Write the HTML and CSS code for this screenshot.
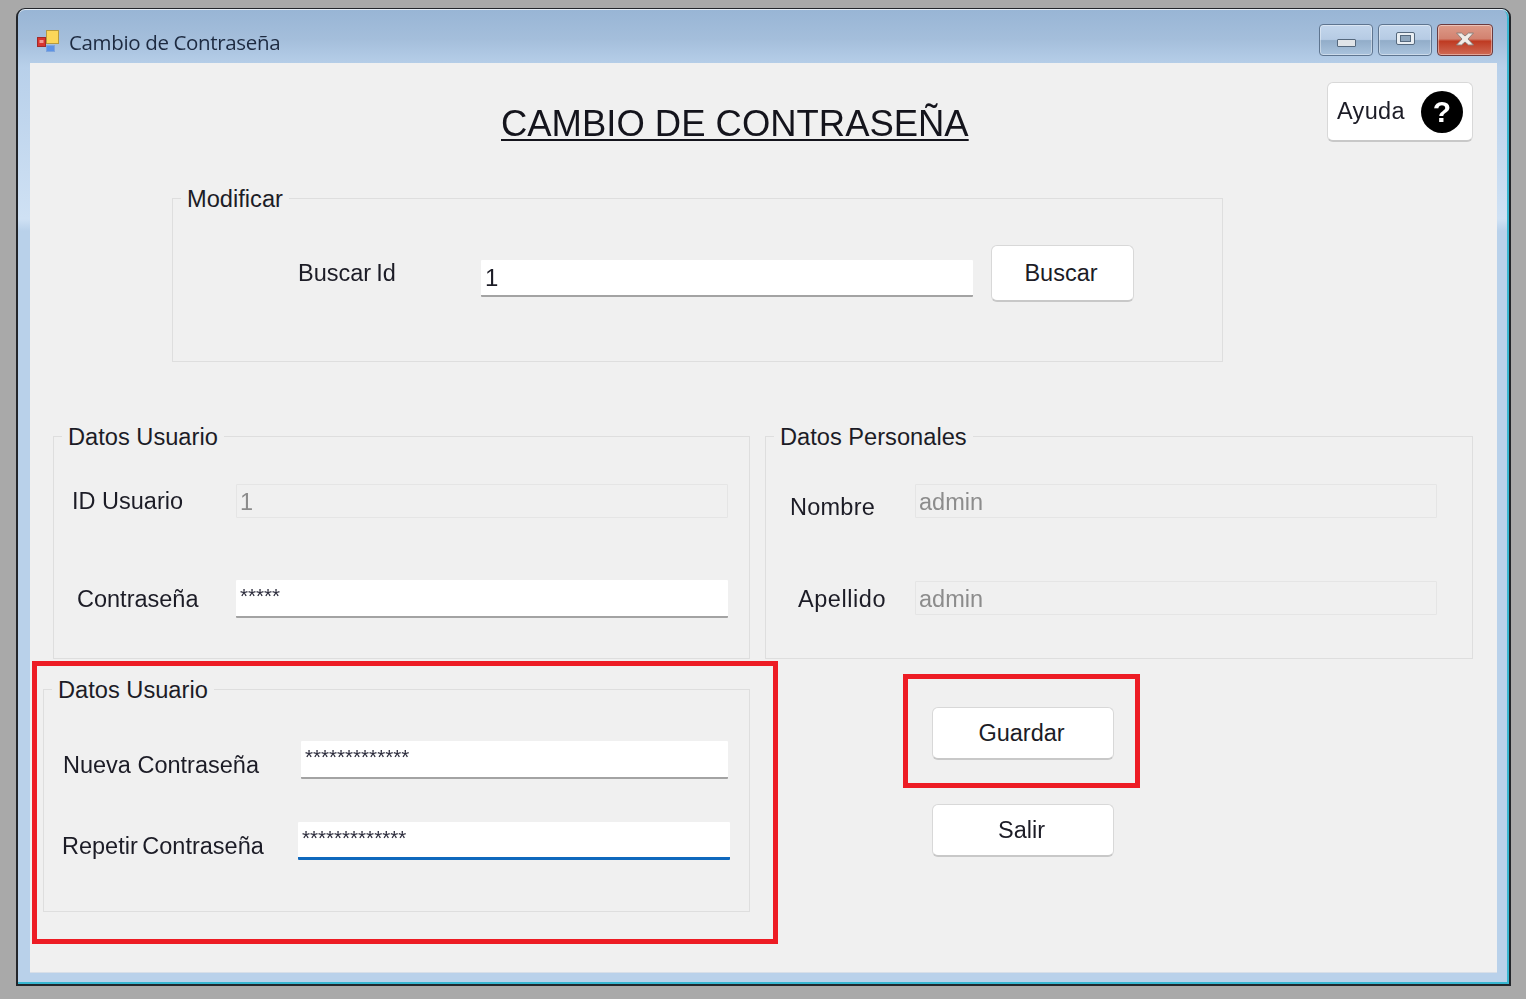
FILE: index.html
```html
<!DOCTYPE html>
<html lang="es">
<head>
<meta charset="utf-8">
<title>Cambio de Contraseña</title>
<link rel="stylesheet" href="styles.css">
</head>
<body>
<main class="stage">
  <div class="window">
    <header class="titlebar">
      <svg class="app-icon" width="22" height="23" viewBox="0 0 22 23">
        <rect x="0.5" y="7.5" width="8" height="9" fill="#d9352f" stroke="#a02a2a"/>
        <rect x="2.5" y="10" width="4" height="3" fill="#f29a94"/>
        <rect x="9.5" y="0.5" width="12" height="13" fill="#fbd75a" stroke="#b59a40"/>
        <rect x="9.5" y="15.5" width="8" height="6" fill="#5d93e6" stroke="#7fa5dc"/>
      </svg>
      <span class="window-title">Cambio de Contraseña</span>
      <div class="caption-buttons">
        <div class="cap cap-min"><span class="glyph-min"></span></div>
        <div class="cap cap-max"><span class="glyph-max"></span></div>
        <div class="cap cap-close">
          <svg class="glyph-close" width="20" height="14" viewBox="0 0 20 14"><path d="M1.500 1h5l3.500 3 3.500-3h5l-5.500 6 5.500 6h-5l-3.500-3-3.500 3h-5l5.500-6z" fill="#f1ece8" stroke="#8d7d78" stroke-width="1"/></svg>
        </div>
      </div>
    </header>
    <div class="client">
      <div class="top-row">
        <h1 class="heading">CAMBIO DE CONTRASEÑA</h1>
        <button class="btn btn-help" type="button"><span class="help-text">Ayuda</span> <span class="help-dot">?</span></button>
      </div>

      <section class="group group-search">
        <h2 class="legend">Modificar</h2>
        <div class="search-row">
          <label class="lbl lbl-buscar">Buscar Id</label>
          <input class="field field-search" type="text" value="1">
          <button class="btn btn-search" type="button">Buscar</button>
        </div>
      </section>

      <div class="data-row">
        <section class="group group-user">
          <h2 class="legend">Datos Usuario</h2>
          <div class="form-grid grid-user">
            <label class="lbl">ID Usuario</label>
            <input class="field is-disabled" type="text" value="1" disabled>
            <label class="lbl lbl-contra">Contraseña</label>
            <input class="field field-pass" type="text" value="*****">
          </div>
        </section>
        <section class="group group-personal">
          <h2 class="legend">Datos Personales</h2>
          <div class="form-grid grid-personal">
            <label class="lbl lbl-nombre">Nombre</label>
            <input class="field is-disabled" type="text" value="admin" disabled>
            <label class="lbl lbl-apellido">Apellido</label>
            <input class="field is-disabled" type="text" value="admin" disabled>
          </div>
        </section>
      </div>

      <div class="bottom-row">
        <section class="group group-new">
          <h2 class="legend">Datos Usuario</h2>
          <div class="form-grid grid-new">
            <label class="lbl lbl-nueva">Nueva Contraseña</label>
            <input class="field field-pass" type="text" value="*************">
            <label class="lbl lbl-repetir">Repetir Contraseña</label>
            <input class="field field-pass field-focus" type="text" value="*************">
          </div>
          <div class="callout callout-group"></div>
        </section>
        <div class="actions">
          <div class="action-wrap">
            <button class="btn btn-action" type="button">Guardar</button>
            <div class="callout callout-save"></div>
          </div>
          <button class="btn btn-action" type="button">Salir</button>
        </div>
      </div>
    </div>
  </div>
</main>
</body>
</html>
```

FILE: styles.css
```css
* { box-sizing: border-box; }

html, body { margin: 0; padding: 0; background: #fff; }

body {
  font-family: "Liberation Sans", Arial, sans-serif;
  color: #1c1c26;
  overflow: hidden;
}

.stage {
  width: 1526px;
  height: 999px;
  padding: 8px 0 0 16px;
  background: #a9a9a9;
}

.window {
  width: 1495px;
  height: 978px;
  padding: 0 12px 12px;
  border: 2px solid #23262b;
  border-top-width: 1px;
  border-radius: 9px 9px 0 0;
  background: linear-gradient(180deg, #98b5d5 0, #a4bedb 30px, #b8d0ea 58px, #cfe1f4 210px, #b9d1ea 222px, #b9d1ea 100%);
  box-shadow: inset 0 1px 0 #e6eef6, inset 0 -2px 0 #38b6d0, inset -2px 0 0 #38b6d0;
  filter: blur(0.45px);
}

.titlebar {
  height: 54px;
  display: flex;
  align-items: center;
  padding: 11px 4px 0 7px;
}

.app-icon { flex: none; }

.window-title {
  margin: 0 0 0 10px;
  font-family: "Open Sans", sans-serif;
  font-size: 20.5px;
  letter-spacing: -0.35px;
  color: #1d2a40;
}

.caption-buttons {
  margin-left: auto;
  display: flex;
  gap: 5px;
  margin-top: -3px;
}

.cap {
  width: 54px;
  height: 32px;
  border: 1px solid #5e7590;
  border-radius: 4px;
  display: flex;
  align-items: center;
  justify-content: center;
  background: linear-gradient(180deg, #c3d6ec 0, #b6cbe4 48%, #92adc9 52%, #aac3dd 100%);
  box-shadow: inset 0 0 0 1px rgba(255, 255, 255, .4);
}

.cap-close {
  width: 56px;
  border-color: #6b3a3e;
  background: linear-gradient(180deg, #dd9a88 0, #d28270 46%, #bf3a22 54%, #cf6a55 100%);
}

.glyph-close { margin-top: -3px; }

.glyph-min {
  width: 19px;
  height: 8px;
  margin-top: 6px;
  background: #e0e4e8;
  border: 1px solid #55687d;
  border-radius: 1px;
}

.glyph-max {
  width: 19px;
  height: 13px;
  margin-top: -4px;
  background: #e9eef3;
  border: 1px solid #55687d;
  border-radius: 2px;
  display: flex;
  align-items: center;
  justify-content: center;
}

.glyph-max::after {
  content: "";
  width: 9px;
  height: 5px;
  background: #8fa6bd;
  border: 1px solid #55687d;
}

.client {
  width: 1467px;
  height: 909px;
  background: #f0f0f0;
  box-shadow: 0 1px 0 #d8dfe8;
}

.top-row {
  display: flex;
  padding: 19px 24px 0 0;
  height: 78px;
}

.heading {
  margin: 0 0 0 471px;
  padding-top: 20px;
  font-size: 36.45px;
  line-height: 44px;
  font-weight: 400;
  text-decoration: underline;
  text-decoration-thickness: 2px;
  text-underline-offset: 3px;
  color: #14141c;
  white-space: nowrap;
}

.btn {
  font: 400 23.5px "Liberation Sans", Arial, sans-serif;
  color: #1c1c26;
  background: #fff;
  border: 1px solid #d8d8d8;
  border-bottom: 2px solid #c8c8c8;
  border-radius: 6px;
  padding: 0 3px 0 0;
}

.btn-help {
  margin-left: auto;
  width: 146px;
  height: 60px;
  display: flex;
  align-items: center;
  padding: 0 9px;
  justify-content: space-between;
}

.help-text { letter-spacing: 0.35px; }

.help-dot {
  width: 42px;
  height: 42px;
  border-radius: 50%;
  background: #000;
  color: #fff;
  font-size: 30px;
  font-weight: 700;
  line-height: 42px;
  text-align: center;
}

.group {
  position: relative;
  border: 1.5px solid #dedede;
}

.legend {
  position: absolute;
  left: 8px;
  top: -13px;
  margin: 0;
  padding: 0 6px;
  background: #f0f0f0;
  font-size: 23.65px;
  font-weight: 400;
  line-height: 27px;
  white-space: nowrap;
}

.group-search {
  width: 1051px;
  height: 164px;
  margin: 57px 0 0 142px;
}

.search-row {
  display: grid;
  grid-template-columns: 183px 492px 143px;
  column-gap: 0;
  padding: 46px 0 0 125px;
  align-items: start;
}

.lbl-buscar { margin-top: 15px; word-spacing: -1.5px; }

.field.field-search { margin-top: 15px; height: 37px; font-size: 24px; }

.btn-search { width: 143px; height: 57px; margin-left: 18px; }

.lbl {
  font-size: 23.5px;
  line-height: 27px;
  white-space: nowrap;
}

.field {
  display: block;
  width: 100%;
  height: 37px;
  padding: 0 4px;
  margin: 0;
  border: 0;
  border-bottom: 2px solid #a3a3a3;
  border-radius: 1px;
  background: #fff;
  font: 400 23.5px "Liberation Sans", Arial, sans-serif;
  color: #1c1c26;
  outline: none;
}

.field-pass {
  font-size: 20.6px;
  padding-bottom: 4px;
  height: 38px;
  color: #2c2c3c;
}

.field.is-disabled {
  height: 34px;
  padding: 2px 3px 0;
  background: #f0f0f0;
  border: 1.5px solid #e5e5e5;
  color: #8c8c8c;
  -webkit-text-fill-color: #8c8c8c;
  opacity: 1;
}

.field-focus {
  border-bottom: 3px solid #0f68bd;
}

.data-row {
  display: flex;
  gap: 15px;
  margin: 74px 0 0 23px;
}

.group-user { width: 697px; height: 223px; }
.group-personal { width: 708px; height: 223px; }

.form-grid {
  display: grid;
  align-items: center;
}

.grid-user {
  grid-template-columns: 164px 492px;
  row-gap: 62px;
  padding: 47px 0 0 18px;
}

.lbl-contra { margin: 0 0 0 5px; }

.grid-personal {
  grid-template-columns: 125px 522px;
  row-gap: 63px;
  padding: 47px 0 0 24px;
}

.lbl-nombre { margin: 6px 0 -6px; letter-spacing: 0.25px; }
.lbl-apellido { margin: 1px 0 -1px 8px; letter-spacing: 0.55px; }

.bottom-row {
  display: flex;
  margin: 30px 0 0 13px;
}

.group-new { width: 707px; height: 223px; flex: none; }

.grid-new {
  grid-template-columns: 238px 427px;
  row-gap: 43px;
  padding: 51px 0 0 19px;
}

.lbl-nueva { margin: 5px 0 -5px; }
.lbl-repetir { margin: 5px 0 -5px -1px; word-spacing: -2px; }

.field-focus { width: 432px; margin-left: -3px; }

.actions {
  width: 182px;
  margin: 18px 0 0 182px;
  display: flex;
  flex-direction: column;
  gap: 44px;
}

.action-wrap { position: relative; height: 53px; }

.btn-action { width: 182px; height: 53px; flex: none; display: block; }

.callout {
  position: absolute;
  border: 5px solid #ed1c24;
  pointer-events: none;
}

.callout-group { left: -12px; top: -29px; right: -29px; bottom: -33px; }
.callout-save { left: -29px; top: -33px; right: -26px; bottom: -28px; }
```
